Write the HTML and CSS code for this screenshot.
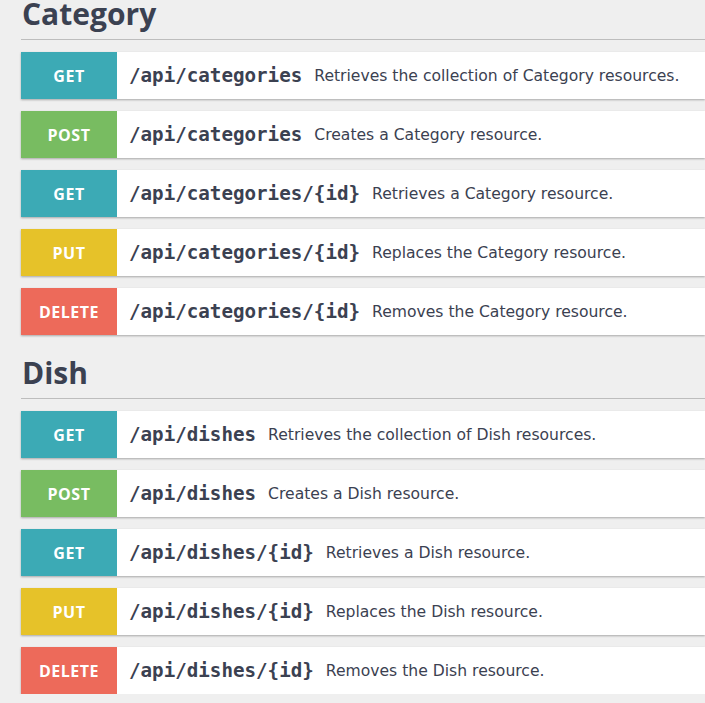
FILE: index.html
```html
<!DOCTYPE html>
<html lang="en">
<head>
<meta charset="utf-8">
<title>API</title>
<link rel="stylesheet" href="styles.css">
</head>
<body>
<div class="wrap">
  <section class="resource">
    <h2 class="resource-title">Category</h2>
    <ul class="ops">
      <li class="op"><span class="method get">GET</span><span class="path">/api/categories</span><span class="desc">Retrieves the collection of Category resources.</span></li>
      <li class="op"><span class="method post">POST</span><span class="path">/api/categories</span><span class="desc">Creates a Category resource.</span></li>
      <li class="op"><span class="method get">GET</span><span class="path">/api/categories/{id}</span><span class="desc">Retrieves a Category resource.</span></li>
      <li class="op"><span class="method put">PUT</span><span class="path">/api/categories/{id}</span><span class="desc">Replaces the Category resource.</span></li>
      <li class="op"><span class="method delete">DELETE</span><span class="path">/api/categories/{id}</span><span class="desc">Removes the Category resource.</span></li>
    </ul>
  </section>
  <section class="resource">
    <h2 class="resource-title">Dish</h2>
    <ul class="ops">
      <li class="op"><span class="method get">GET</span><span class="path">/api/dishes</span><span class="desc">Retrieves the collection of Dish resources.</span></li>
      <li class="op"><span class="method post">POST</span><span class="path">/api/dishes</span><span class="desc">Creates a Dish resource.</span></li>
      <li class="op"><span class="method get">GET</span><span class="path">/api/dishes/{id}</span><span class="desc">Retrieves a Dish resource.</span></li>
      <li class="op"><span class="method put">PUT</span><span class="path">/api/dishes/{id}</span><span class="desc">Replaces the Dish resource.</span></li>
      <li class="op"><span class="method delete">DELETE</span><span class="path">/api/dishes/{id}</span><span class="desc">Removes the Dish resource.</span></li>
    </ul>
  </section>
</div>
</body>
</html>
```

FILE: styles.css
```css
html, body {
  margin: 0;
  padding: 0;
  background: #efefef;
  overflow: hidden;
}
.wrap {
  padding-left: 21px;
  display: flex;
  flex-direction: column;
  gap: 24px;
}
.resource-title {
  margin: -1px 0 0 0;
  padding: 0 0 10px 1px;
  font-family: "Open Sans", sans-serif;
  font-weight: 700;
  font-size: 30px;
  line-height: 30px;
  color: #3b4151;
  border-bottom: 1px solid #bdbdbd;
}
.ops {
  list-style: none;
  margin: 12px 0 0 0;
  padding: 0;
  display: flex;
  flex-direction: column;
  gap: 12px;
}
.op {
  display: flex;
  align-items: center;
  height: 47px;
  background: #fff;
  box-shadow: 0 1px 2px rgba(0, 0, 0, 0.3);
}
.method {
  flex: 0 0 96px;
  align-self: stretch;
  display: flex;
  align-items: center;
  justify-content: center;
  font-family: "Open Sans", sans-serif;
  font-weight: 700;
  font-size: 16px;
  letter-spacing: 0.5px;
  color: #fff;
}
.get { background: #3caab5; }
.post { background: #78bc61; }
.put { background: #e6c229; }
.delete { background: #ed6a5a; }
.path {
  padding-left: 12px;
  font-family: "DejaVu Sans Mono", monospace;
  font-weight: 700;
  font-size: 19.2px;
  color: #3b4151;
}
.desc {
  padding-left: 12px;
  font-family: "DejaVu Sans", sans-serif;
  font-size: 15.6px;
  color: #3b4151;
  white-space: nowrap;
}
```
